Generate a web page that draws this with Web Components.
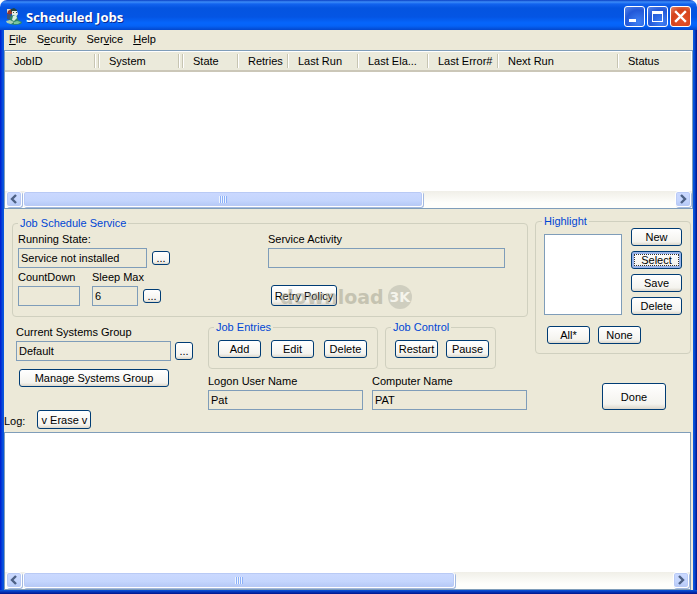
<!DOCTYPE html>
<html lang="en">
<head>
<meta charset="utf-8">
<title>Scheduled Jobs</title>
<style>
    html { background: #fff; }
    body {
        margin: 0;
        font: 11px/14px "Liberation Sans", Arial, sans-serif;
        color: #000;
    }
</style>
</head>
<body>
<jobs-window></jobs-window>

<script>
const define = (name, html, setup) => {
    const template = document.createElement('template');
    template.innerHTML = html;
    customElements.define(name, class extends HTMLElement {
        constructor() {
            super();
            this.attachShadow({ mode: 'open' });
        }
        connectedCallback() {
            if (this.shadowRoot.childNodes.length) return;
            this.shadowRoot.appendChild(template.content.cloneNode(true));
            if (setup) setup(this, this.shadowRoot);
        }
    });
};

define('xp-button', `
    <style>
    :host { display: inline-block; width: 43px; height: 18px; flex: none; }
    :host([size="dots"]) { width: 18px; height: 14px; }
    button {
        display: flex;
        align-items: center;
        justify-content: center;
        width: 100%;
        height: 100%;
        padding: 0;
        border: 1px solid #003c74;
        border-radius: 3px;
        background: linear-gradient(#fff, #f4f3ee 80%, #dcd7cb);
        font: inherit;
        color: #000;
        white-space: nowrap;
    }
    :host([active]) button {
        box-shadow: inset 0 0 0 2px #98b4ea;
        outline: 1px dotted #333;
        outline-offset: -4px;
    }
    </style>
    <button type="button"><slot></slot></button>
`);

define('xp-field', `
    <style>
    :host { display: flex; flex-direction: column; gap: 2px; }
    label { white-space: nowrap; }
    input {
        box-sizing: border-box;
        width: 100%;
        height: 20px;
        padding: 0 2px;
        border: 1px solid #7f9db9;
        background: transparent;
        font: inherit;
        color: inherit;
        outline: 0;
    }
    </style>
    <label for="box"></label>
    <input id="box" type="text" readonly>
`, (host, root) => {
    root.querySelector('label').textContent = host.getAttribute('label');
    root.querySelector('input').value = host.getAttribute('value') || '';
});

define('xp-group', `
    <style>
    :host { display: block; }
    fieldset {
        box-sizing: border-box;
        margin: 0;
        min-width: 0;
        padding: var(--group-padding, 0);
        border: 1px solid #d0d0bf;
        border-radius: 4px;
    }
    legend {
        height: 14px;
        padding: 0 2px;
        margin-left: var(--legend-indent, 0);
        color: #0046d5;
    }
    </style>
    <fieldset><legend></legend><slot></slot></fieldset>
`, (host, root) => {
    root.querySelector('legend').textContent = host.getAttribute('label');
});

define('xp-scrollbar', `
    <style>
    :host {
        display: flex;
        gap: 1px;
        height: 17px;
        padding: 0 1px;
        background: linear-gradient(#f0efe8, #fefefb 70%);
    }
    button, .thumb {
        box-sizing: border-box;
        height: 16px;
        border: 1px solid #fff;
        border-radius: 3px;
        background: linear-gradient(#cbd9ff, #c4d5fd 60%, #b4c8f6);
        box-shadow: inset 0 0 0 1px #b9caf5, 1px 1px 0 #a3b9e0;
    }
    button {
        display: flex;
        align-items: center;
        justify-content: center;
        width: 16px;
        padding: 0;
        flex: none;
    }
    .track { flex: 1; }
    .thumb {
        display: flex;
        align-items: center;
        justify-content: center;
        width: var(--thumb, 60%);
    }
    .grip {
        width: 8px;
        height: 7px;
        background: repeating-linear-gradient(90deg, #eef4fe 0 1px, #8cb0f8 1px 2px);
    }
    </style>
    <button type="button" aria-label="Scroll left">
        <svg width="8" height="10"><path d="M6 1L2 5l4 4" fill="none" stroke="#4d6185" stroke-width="2.4"/></svg>
    </button>
    <div class="track"><div class="thumb"><div class="grip"></div></div></div>
    <button type="button" aria-label="Scroll right">
        <svg width="8" height="10"><path d="M2 1l4 4-4 4" fill="none" stroke="#4d6185" stroke-width="2.4"/></svg>
    </button>
`);

define('xp-titlebar', `
    <style>
    :host {
        display: flex;
        align-items: center;
        box-sizing: border-box;
        height: 30px;
        padding: 3px 6px 0;
        gap: 4px;
        border-radius: 7px 7px 0 0;
        background: linear-gradient(#0a3fc4, #3c8cf8 2px, #1263ee 4px, #0454e0 8px, #0455e4 17px, #0566fc 23px, #0562f6 26px, #0347cc);
        color: #fff;
    }
    h1 {
        flex: 1;
        margin: 0;
        font: bold 13px/18px "Open Sans", "Noto Sans", sans-serif;
        text-shadow: 1px 1px 0 #0a2b93;
    }
    .buttons { display: flex; gap: 2px; }
    .buttons button {
        width: 21px;
        height: 21px;
        padding: 0;
        border: 1px solid #fff;
        border-radius: 3px;
        background: radial-gradient(circle at 70% 80%, #3f80f4, #2358d8 60%, #5886e8);
    }
    .buttons button.close {
        background: radial-gradient(circle at 60% 70%, #e4532b, #d5431c 60%, #e58a6c);
    }
    svg { display: block; }
    </style>
    <svg width="16" height="17" viewBox="0 0 16 17" aria-hidden="true">
        <path d="M1 1h5v2l-2 2H1z" fill="#e6ddcc"/>
        <path d="M2 3l3-2 3 1-1 3-3 2-3-1z" fill="#9c3a2c"/>
        <path d="M5 1l3-1 3 2v2l-3-1-3 1z" fill="#24443f"/>
        <path d="M6 3h5l1 3-2 3-4-1z" fill="#e4ebe2"/>
        <path d="M7 4h1v1H7zM10 4h1v1h-1z" fill="#30493f"/>
        <path d="M1 7l3-1 2 2-2 4-3-1z" fill="#3f5573"/>
        <path d="M4 9l3-2 4 1 1 4 4 2-1 2-6 1-6-1z" fill="#2f8468"/>
        <path d="M7 8l3-1 1 3-3 3-2-1z" fill="#d5f0df"/>
        <path d="M0 13l4-1 4 2-3 2-4-1z" fill="#a8cfb6"/>
        <path d="M8 14l3-1 4 1-3 2H8z" fill="#79c69d"/>
    </svg>
    <h1><slot></slot></h1>
    <div class="buttons">
        <button type="button" aria-label="Minimize"><svg width="19" height="19"><path d="M4 12h7v3H4z" fill="#fff"/></svg></button>
        <button type="button" aria-label="Maximize"><svg width="19" height="19"><path d="M4 4h11v11H4zM5 7v7h9V7z" fill="#fff" fill-rule="evenodd"/></svg></button>
        <button type="button" class="close" aria-label="Close"><svg width="19" height="19"><path d="M5 5l9 9m0-9l-9 9" stroke="#fff" stroke-width="2.4" stroke-linecap="square"/></svg></button>
    </div>
`);

define('xp-menubar', `
    <style>
    :host {
        display: flex;
        gap: 10px;
        box-sizing: border-box;
        height: 20px;
        padding: 0 5px 2px;
    }
    button {
        padding: 0;
        border: 0;
        background: none;
        font: inherit;
        color: inherit;
    }
    </style>
    <button type="button"><u>F</u>ile</button>
    <button type="button">S<u>e</u>curity</button>
    <button type="button">Ser<u>v</u>ice</button>
    <button type="button"><u>H</u>elp</button>
`);

define('job-list', `
    <style>
    :host {
        display: flex;
        flex-direction: column;
        box-sizing: border-box;
        border: 1px solid #7f9db9;
        background: #fff;
    }
    .rows { flex: 1; padding: 1px 1px 0 0; }
    table {
        width: 100%;
        table-layout: fixed;
        border-collapse: separate;
        border-spacing: 0;
    }
    th {
        height: 20px;
        padding: 0 0 0 9px;
        overflow: hidden;
        font-weight: normal;
        text-align: left;
        white-space: nowrap;
        box-sizing: border-box;
        border-bottom: 2px solid #cbc7b8;
        background:
            linear-gradient(#c7c5b2, #c7c5b2) right 1px center / 1px 14px no-repeat,
            linear-gradient(#fff, #fff) right 0 center / 1px 14px no-repeat,
            #ebeadb;
    }
    th:last-child { background: #ebeadb; }
    .narrow { padding: 0; }
    </style>
    <div class="rows">
        <table>
            <colgroup>
                <col style="width: 91px"><col style="width: 4px"><col style="width: 80px"><col style="width: 4px">
                <col style="width: 55px"><col style="width: 50px"><col style="width: 70px"><col style="width: 70px">
                <col style="width: 70px"><col style="width: 120px"><col>
            </colgroup>
            <thead>
                <tr>
                    <th>JobID</th><th class="narrow"></th><th>System</th><th class="narrow"></th>
                    <th>State</th><th>Retries</th><th>Last Run</th><th>Last Ela...</th>
                    <th>Last Error#</th><th>Next Run</th><th>Status</th>
                </tr>
            </thead>
        </table>
    </div>
    <xp-scrollbar></xp-scrollbar>
`);

define('service-group', `
    <style>
    :host { display: block; }
    xp-group { --group-padding: 2px 5px 10px; }
    .body {
        display: grid;
        grid-template-columns: 250px 1fr;
        gap: 2px 0;
        padding-right: 17px;
    }
    .row { display: flex; align-items: flex-end; }
    .dots { margin: 0 0 3px 5px; }
    .state { width: 129px; }
    .count { width: 62px; margin-right: 12px; }
    .sleep { width: 46px; }
    .retry { width: 66px; height: 21px; margin-left: 3px; }
    .retry-row { position: relative; }
    /* the mark lies over the retry button */
    .mark {
        position: absolute;
        left: 12px;
        bottom: -3px;
        display: flex;
        align-items: center;
        gap: 4px;
        opacity: 0.5;
        pointer-events: none;
        color: #a09f8c;
        font: bold 19px/24px "DejaVu Sans", sans-serif;
    }
    .badge {
        width: 24px;
        height: 24px;
        border-radius: 50%;
        background: #b4b4a8;
        color: #fff;
        font-size: 14px;
        text-align: center;
    }
    </style>
    <xp-group label="Job Schedule Service">
        <div class="body">
            <div class="row">
                <xp-field class="state" label="Running State:" value="Service not installed"></xp-field>
                <xp-button class="dots" size="dots">...</xp-button>
            </div>
            <xp-field label="Service Activity"></xp-field>
            <div class="row">
                <xp-field class="count" label="CountDown"></xp-field>
                <xp-field class="sleep" label="Sleep Max" value="6"></xp-field>
                <xp-button class="dots" size="dots">...</xp-button>
            </div>
            <div class="row retry-row">
                <xp-button class="retry">Retry Policy</xp-button>
                <div class="mark"><span>download</span><span class="badge">3K</span></div>
            </div>
        </div>
    </xp-group>
`);

define('highlight-group', `
    <style>
    :host { display: block; }
    xp-group { --group-padding: 0 8px 9px; --legend-indent: -2px; }
    .top { display: flex; gap: 9px; }
    select {
        box-sizing: border-box;
        flex: 1;
        min-width: 0;
        height: 81px;
        margin: 6px 0 0;
        border: 1px solid #7f9db9;
        border-radius: 0;
        background: #fff;
    }
    .side { display: flex; flex-direction: column; gap: 5px; }
    .side xp-button { width: 51px; }
    .bottom { display: flex; gap: 8px; margin: 11px 0 0 3px; }
    </style>
    <xp-group label="Highlight">
        <div class="top">
            <select size="5" aria-label="Highlight"></select>
            <div class="side">
                <xp-button>New</xp-button>
                <xp-button active>Select</xp-button>
                <xp-button>Save</xp-button>
                <xp-button>Delete</xp-button>
            </div>
        </div>
        <div class="bottom">
            <xp-button>All*</xp-button>
            <xp-button>None</xp-button>
        </div>
    </xp-group>
`);

define('job-panel', `
    <style>
    :host { display: flex; gap: 7px; padding: 5px 2px 0 8px; }
    .main { flex: 1; min-width: 0; padding-top: 2px; }
    .lower { display: flex; padding: 3px 1px 0 4px; }
    .systems { width: 192px; padding-top: 5px; }
    .row { display: flex; align-items: flex-end; gap: 4px; }
    .systems xp-field { width: 155px; }
    .systems .row xp-button { height: 18px; margin-bottom: 1px; }
    .manage { width: 150px; margin: 8px 0 0 3px; }
    .jobs { flex: 1; }
    .groups { display: flex; gap: 7px; }
    xp-group { --group-padding: 6px 9px 10px; --legend-indent: -4px; }
    .entries { width: 170px; }
    .control { width: 111px; }
    .buttons { display: flex; gap: 10px; }
    .control .buttons { gap: 8px; }
    .names { display: flex; gap: 9px; margin-top: 5px; }
    .names xp-field { flex: 1; }
    .side { display: flex; flex-direction: column; width: 156px; }
    .done { width: 64px; height: 27px; margin: 29px 25px 0 auto; }
    </style>
    <div class="main">
        <service-group></service-group>
        <div class="lower">
            <div class="systems">
                <div class="row">
                    <xp-field label="Current Systems Group" value="Default"></xp-field>
                    <xp-button size="dots">...</xp-button>
                </div>
                <xp-button class="manage">Manage Systems Group</xp-button>
            </div>
            <div class="jobs">
                <div class="groups">
                    <xp-group class="entries" label="Job Entries">
                        <div class="buttons">
                            <xp-button>Add</xp-button>
                            <xp-button>Edit</xp-button>
                            <xp-button>Delete</xp-button>
                        </div>
                    </xp-group>
                    <xp-group class="control" label="Job Control">
                        <div class="buttons">
                            <xp-button>Restart</xp-button>
                            <xp-button>Pause</xp-button>
                        </div>
                    </xp-group>
                </div>
                <div class="names">
                    <xp-field label="Logon User Name" value="Pat"></xp-field>
                    <xp-field label="Computer Name" value="PAT"></xp-field>
                </div>
            </div>
        </div>
    </div>
    <div class="side">
        <highlight-group></highlight-group>
        <xp-button class="done">Done</xp-button>
    </div>
`);

define('job-log', `
    <style>
    :host { display: flex; flex-direction: column; }
    .bar { display: flex; align-items: center; gap: 12px; height: 22px; }
    .bar xp-button { width: 54px; height: 19px; margin-bottom: 3px; }
    .view {
        flex: 1;
        display: flex;
        flex-direction: column;
        margin-right: 2px;
        border: 1px solid #7f9db9;
        background: #fff;
    }
    textarea {
        flex: 1;
        min-height: 0;
        padding: 2px;
        border: 0;
        background: none;
        font: inherit;
        resize: none;
        outline: 0;
    }
    </style>
    <div class="bar">
        <label for="log">Log:</label>
        <xp-button>v Erase v</xp-button>
    </div>
    <div class="view">
        <textarea id="log" readonly></textarea>
        <xp-scrollbar></xp-scrollbar>
    </div>
`);

define('jobs-window', `
    <style>
    :host {
        display: flex;
        flex-direction: column;
        min-height: 100vh;
    }
    .frame {
        flex: 1;
        display: flex;
        flex-direction: column;
        padding: 0 4px 4px;
        background:
            linear-gradient(#0855dd, #00138c) bottom / 100% 4px no-repeat,
            linear-gradient(90deg, #0019cf, #0855dd 3px, #0855dd calc(100% - 3px), #00138c);
    }
    .client {
        flex: 1;
        display: flex;
        flex-direction: column;
        background: #ece9d8;
    }
    job-list { flex: 1 1 159px; --thumb: 61.5%; }
    job-log { flex: 1 1 180px; --thumb: 66.5%; }
    </style>
    <xp-titlebar>Scheduled Jobs</xp-titlebar>
    <div class="frame">
        <div class="client">
            <xp-menubar></xp-menubar>
            <job-list></job-list>
            <job-panel></job-panel>
            <job-log></job-log>
        </div>
    </div>
`);
</script>
</body>
</html>
